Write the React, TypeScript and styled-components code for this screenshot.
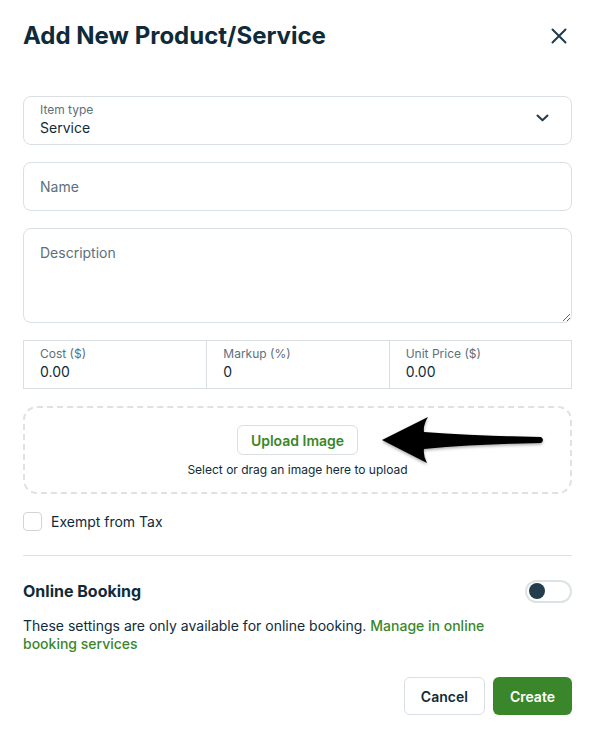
import React from "react";
import styled, { createGlobalStyle } from "styled-components";

const GlobalStyle = createGlobalStyle`
  body {
    margin: 0;
    background: #ffffff;
    font-family: "Inter", "Liberation Sans", sans-serif;
    color: #0f2b3a;
  }
  * { box-sizing: border-box; }
`;

const Modal = styled.div`
  width: 595px;
  padding: 20px 23px 25px;
  display: flex;
  flex-direction: column;
`;

const Header = styled.div`
  display: flex;
  align-items: center;
  justify-content: space-between;
  height: 32px;
  margin-bottom: 44px;
`;

const Title = styled.h2`
  margin: 0;
  font-size: 24px;
  line-height: 32px;
  font-weight: 700;
  color: #0f2b3a;
`;

const CloseBtn = styled.button`
  border: none;
  background: transparent;
  padding: 0;
  width: 20px;
  height: 20px;
  display: flex;
  align-items: center;
  justify-content: center;
  margin-right: 3px;
  cursor: pointer;
`;

const Fields = styled.div`
  display: flex;
  flex-direction: column;
  gap: 17px;
`;

const SelectBox = styled.div`
  position: relative;
  height: 49px;
  border: 1px solid #d9dfe3;
  border-radius: 8px;
  padding: 5px 16px 6px;
  display: flex;
  flex-direction: column;
`;

const SmallLabel = styled.span`
  font-size: 12px;
  line-height: 16px;
  color: #5c707c;
`;

const Value = styled.span`
  font-size: 14px;
  line-height: 19px;
  color: #0f2b3a;
`;

const Chevron = styled.svg`
  position: absolute;
  right: 22px;
  top: 17px;
`;

const TextInput = styled.input`
  height: 49px;
  border: 1px solid #d9dfe3;
  border-radius: 8px;
  padding: 0 16px;
  font-family: inherit;
  font-size: 14px;
  color: #0f2b3a;
  outline: none;
  &::placeholder { color: #5c707c; }
`;

const TextArea = styled.textarea`
  height: 95px;
  border: 1px solid #d9dfe3;
  border-radius: 8px;
  padding: 14px 16px;
  font-family: inherit;
  font-size: 14px;
  line-height: 20px;
  color: #0f2b3a;
  resize: vertical;
  outline: none;
  &::placeholder { color: #5c707c; }
`;

const PriceRow = styled.div`
  display: grid;
  grid-template-columns: 1fr 1fr 1fr;
  border: 1px solid #d9dfe3;
  height: 49px;
`;

const PriceCell = styled.div`
  display: flex;
  flex-direction: column;
  padding: 5px 16px 6px;
  & + & { border-left: 1px solid #d9dfe3; }
`;

const UploadZone = styled.div`
  position: relative;
  border: 2px dashed #dee2e5;
  border-radius: 14px;
  padding: 17px 0 14px;
  display: flex;
  flex-direction: column;
  align-items: center;
  gap: 7px;
`;

const OutlineBtn = styled.button<{ $small?: boolean }>`
  height: ${(p) => (p.$small ? "30px" : "38px")};
  padding: ${(p) => (p.$small ? "0 13px" : "0 16px")};
  border: 1px solid #d9dfe3;
  border-radius: 6px;
  background: #ffffff;
  font-family: inherit;
  font-size: 14px;
  font-weight: 600;
  color: ${(p) => (p.$small ? "#3a872b" : "#0f2b3a")};
  cursor: pointer;
`;

const Hint = styled.span`
  font-size: 12px;
  line-height: 16px;
  color: #0f2b3a;
`;

const Arrow = styled.svg`
  position: absolute;
  left: 353px;
  top: 3px;
  overflow: visible;
`;

const CheckRow = styled.label`
  display: flex;
  align-items: center;
  gap: 9px;
  margin-top: 18px;
  font-size: 14px;
  line-height: 19px;
  color: #0f2b3a;
`;

const CheckBox = styled.span`
  width: 19px;
  height: 19px;
  border: 1px solid #cfd6da;
  border-radius: 4px;
`;

const Divider = styled.hr`
  margin: 24px 0 0;
  border: none;
  border-top: 1px solid #dde2e5;
`;

const BookingRow = styled.div`
  display: flex;
  align-items: center;
  justify-content: space-between;
  height: 24px;
  margin-top: 23px;
`;

const SubTitle = styled.h3`
  margin: 0;
  font-size: 16px;
  font-weight: 700;
  color: #0f2b3a;
`;

const Toggle = styled.span`
  width: 47px;
  height: 23px;
  border: 2px solid #dde2e5;
  border-radius: 12px;
  padding: 1.5px 2px;
  display: flex;
  align-items: center;
`;

const Knob = styled.span`
  width: 16px;
  height: 16px;
  border-radius: 50%;
  background: #213d4e;
`;

const Note = styled.p`
  margin: 14px 0 0;
  max-width: 468px;
  font-size: 14px;
  line-height: 18px;
  color: #0f2b3a;
  a {
    color: #3a872b;
    font-weight: 500;
    text-decoration: none;
  }
`;

const Footer = styled.div`
  display: flex;
  justify-content: flex-end;
  gap: 8px;
  margin-top: 24px;
`;

const PrimaryBtn = styled.button`
  height: 38px;
  padding: 0 17px;
  border: none;
  border-radius: 6px;
  background: #3a872b;
  color: #ffffff;
  font-family: inherit;
  font-size: 14px;
  font-weight: 600;
  cursor: pointer;
`;

export default function App() {
  return (
    <>
      <GlobalStyle />
      <Modal>
        <Header>
          <Title>Add New Product/Service</Title>
          <CloseBtn aria-label="Close">
            <svg width="16" height="16" viewBox="0 0 16 16">
              <path d="M1.5 1.5 L14.5 14.5 M14.5 1.5 L1.5 14.5" stroke="#1f3b4d" strokeWidth="2" strokeLinecap="round" />
            </svg>
          </CloseBtn>
        </Header>

        <Fields>
          <SelectBox>
            <SmallLabel>Item type</SmallLabel>
            <Value>Service</Value>
            <Chevron width="13" height="8" viewBox="0 0 13 8">
              <path d="M1.5 1.5 L6.5 6.3 L11.5 1.5" fill="none" stroke="#1f3b4d" strokeWidth="2" strokeLinecap="round" strokeLinejoin="round" />
            </Chevron>
          </SelectBox>

          <TextInput placeholder="Name" />
          <TextArea placeholder="Description" />

          <PriceRow>
            <PriceCell>
              <SmallLabel>Cost ($)</SmallLabel>
              <Value>0.00</Value>
            </PriceCell>
            <PriceCell>
              <SmallLabel>Markup (%)</SmallLabel>
              <Value>0</Value>
            </PriceCell>
            <PriceCell>
              <SmallLabel>Unit Price ($)</SmallLabel>
              <Value>0.00</Value>
            </PriceCell>
          </PriceRow>

          <UploadZone>
            <OutlineBtn $small>Upload Image</OutlineBtn>
            <Hint>Select or drag an image here to upload</Hint>
            <Arrow width="175" height="60" viewBox="0 0 175 60">
              <defs>
                <filter id="sh" x="-10%" y="-20%" width="120%" height="150%">
                  <feDropShadow dx="0" dy="1.5" stdDeviation="1.5" floodColor="#000" floodOpacity="0.35" />
                </filter>
              </defs>
              <path
                d="M4 29 L50 6 Q45 14 46 21 Q100 25 163 26 Q167 29 163 32 Q100 33 46 38 Q45 45 49 52 Z"
                fill="#000"
                filter="url(#sh)"
              />
            </Arrow>
          </UploadZone>
        </Fields>

        <CheckRow>
          <CheckBox />
          Exempt from Tax
        </CheckRow>

        <Divider />

        <BookingRow>
          <SubTitle>Online Booking</SubTitle>
          <Toggle>
            <Knob />
          </Toggle>
        </BookingRow>

        <Note>
          These settings are only available for online booking. <a href="#">Manage in online booking services</a>
        </Note>

        <Footer>
          <OutlineBtn>Cancel</OutlineBtn>
          <PrimaryBtn>Create</PrimaryBtn>
        </Footer>
      </Modal>
    </>
  );
}
